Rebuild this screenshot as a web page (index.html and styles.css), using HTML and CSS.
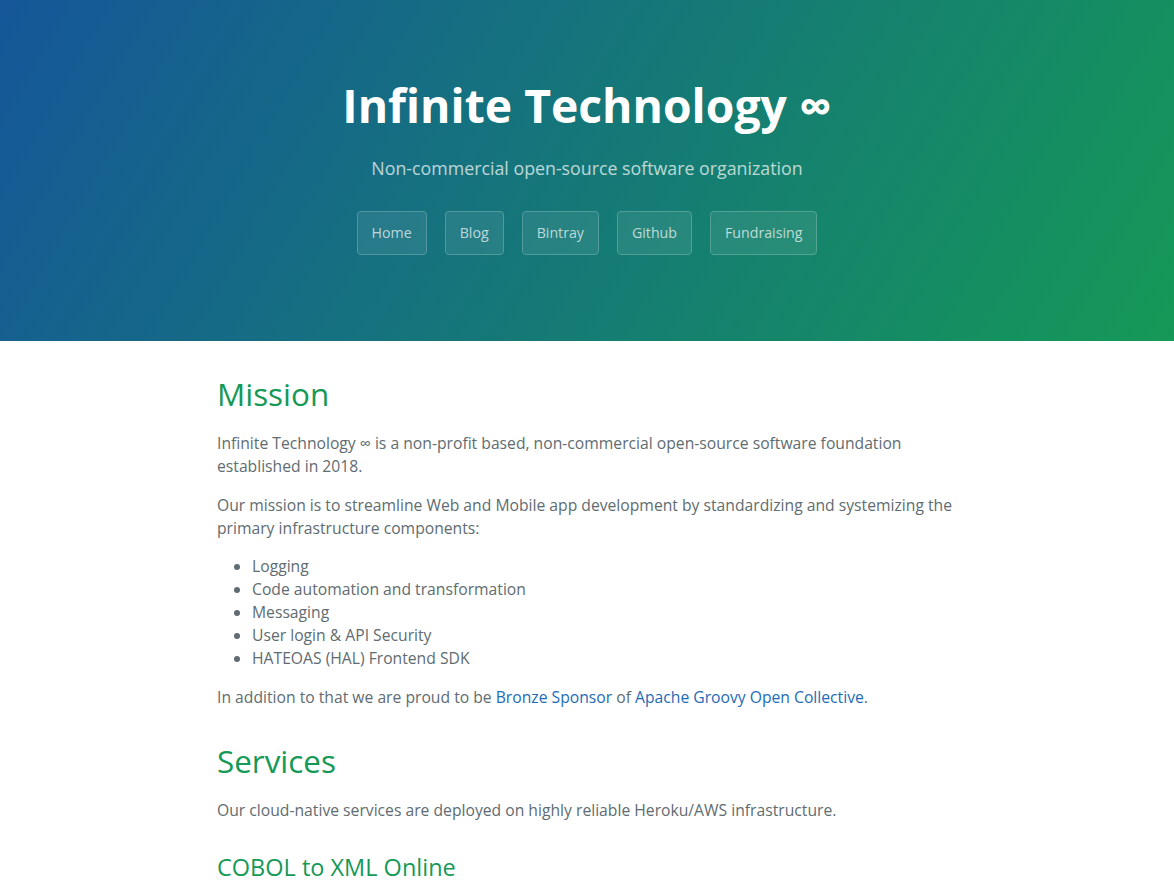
FILE: index.html
```html
<!DOCTYPE html>
<html lang="en">
<head>
<meta charset="utf-8">
<title>Infinite Technology ∞</title>
<link rel="stylesheet" href="styles.css">
</head>
<body>
<section class="page-header">
  <h1 class="project-name">Infinite Technology ∞</h1>
  <h2 class="project-tagline">Non-commercial open-source software organization</h2>
  <nav class="buttons">
    <a class="btn" href="#">Home</a>
    <a class="btn" href="#">Blog</a>
    <a class="btn" href="#">Bintray</a>
    <a class="btn" href="#">Github</a>
    <a class="btn" href="#">Fundraising</a>
  </nav>
</section>
<section class="main-content">
  <h1 class="first">Mission</h1>
  <p>Infinite Technology ∞ is a non-profit based, non-commercial open-source software foundation established in 2018.</p>
  <p>Our mission is to streamline Web and Mobile app development by standardizing and systemizing the primary infrastructure components:</p>
  <ul>
    <li>Logging</li>
    <li>Code automation and transformation</li>
    <li>Messaging</li>
    <li>User login &amp; API Security</li>
    <li>HATEOAS (HAL) Frontend SDK</li>
  </ul>
  <p>In addition to that we are proud to be <a href="#">Bronze Sponsor</a> of <a href="#">Apache Groovy Open Collective</a>.</p>
  <h1>Services</h1>
  <p>Our cloud-native services are deployed on highly reliable Heroku/AWS infrastructure.</p>
  <h2>COBOL to XML Online</h2>
  <p>Convert COBOL copybooks and data files to XML documents online.</p>
</section>
</body>
</html>
```

FILE: styles.css
```css
html, body {
  margin: 0;
  padding: 0;
}
body {
  font-family: "Open Sans", "Helvetica Neue", Helvetica, Arial, sans-serif;
  font-size: 14px;
  line-height: 1.5;
  color: #606c71;
  background: #fff;
}
a {
  color: #1e6bb8;
  text-decoration: none;
}
.page-header {
  color: #fff;
  text-align: center;
  background-color: #159957;
  background-image: linear-gradient(120deg, #155799, #159957);
  padding: 72px 84px 72px;
}
.project-name {
  margin: 0 0 1.4px;
  font-size: 46.3px;
  line-height: 68px;
  font-weight: 700;
}
.project-tagline {
  margin: 14.5px 0 30px;
  font-size: 17.8px;
  line-height: 26px;
  font-weight: normal;
  opacity: 0.7;
}
.buttons {
  display: flex;
  justify-content: center;
  gap: 18px;
}
.btn {
  display: inline-block;
  margin-bottom: 14px;
  padding: 10.5px 14px;
  font-size: 14.2px;
  line-height: 21px;
  color: rgba(255, 255, 255, 0.7);
  background-color: rgba(255, 255, 255, 0.08);
  border: 1px solid rgba(255, 255, 255, 0.2);
  border-radius: 4.2px;
}
.main-content {
  max-width: 740px;
  margin: 0 auto;
  padding: 29px 0 28px;
  font-size: 15.7px;
  line-height: 23px;
  word-wrap: break-word;
}
.main-content h1,
.main-content h2 {
  margin-top: 28px;
  margin-bottom: 15px;
  font-weight: normal;
  color: #159957;
}
.main-content h1 {
  font-size: 31.4px;
  line-height: 47px;
}
.main-content h2 {
  margin-top: 28px;
  font-size: 23.5px;
  line-height: 35px;
}
.main-content h1.first {
  margin-top: 0;
}
.main-content p {
  margin: 15.5px 0;
}
.main-content ul {
  margin: 15.5px 0;
  padding-left: 35px;
}
```
